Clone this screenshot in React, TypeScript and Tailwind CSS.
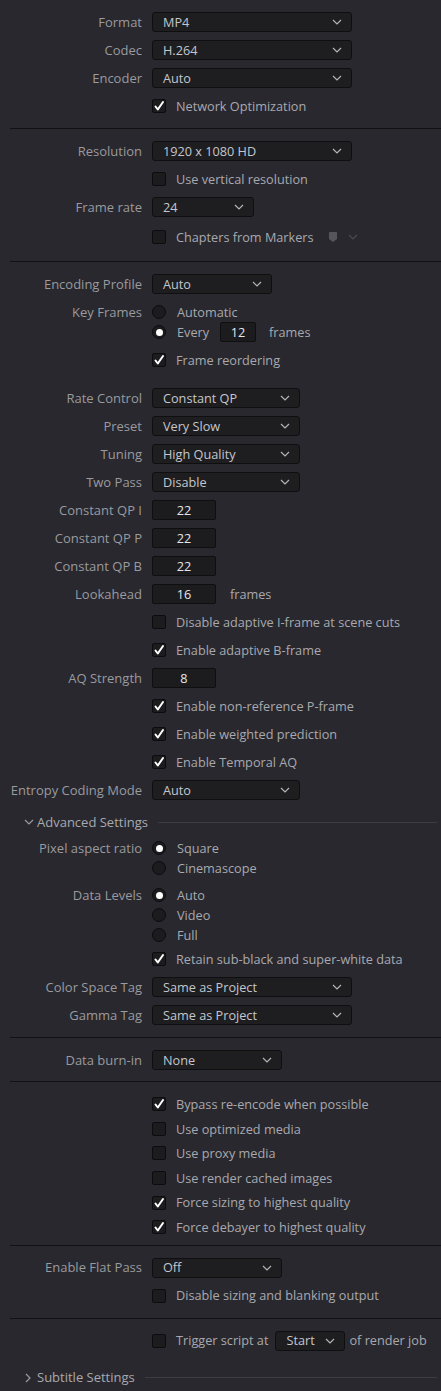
import type { ReactNode } from "react"

function Chevron({ className = "text-[#b4b4b8]" }: { className?: string }) {
  return (
    <svg width="10" height="6" viewBox="0 0 10 6" className={className}>
      <path d="M1 1l4 4 4-4" stroke="currentColor" fill="none" strokeWidth="1.2" />
    </svg>
  )
}

function Select({ value, w }: { value: string; w: string }) {
  return (
    <div className={`flex h-[20px] ${w} items-center justify-between rounded-[3px] border border-[#0f0f12] bg-[#1e1e21] pl-[10px] pr-[9px] text-[#c4c6cc]`}>
      <span>{value}</span>
      <Chevron />
    </div>
  )
}

function NumBox({ value, w }: { value: string; w: string }) {
  return (
    <div className={`flex h-[20px] ${w} items-center justify-center rounded-[2px] border border-[#0f0f12] bg-[#1c1c1f] text-[#e4e6ea]`}>
      {value}
    </div>
  )
}

function Check({ on = false }: { on?: boolean }) {
  return (
    <div className="flex h-[14px] w-[14px] shrink-0 items-center justify-center rounded-[2px] border border-[#0c0c0e] bg-[#1c1c1f]">
      {on && (
        <svg width="12" height="12" viewBox="0 0 12 12">
          <path d="M2.5 6.5l2.3 3L10 2" stroke="#fff" fill="none" strokeWidth="2" strokeLinecap="round" strokeLinejoin="round" />
        </svg>
      )}
    </div>
  )
}

function Radio({ on = false }: { on?: boolean }) {
  return (
    <div className="flex h-[14px] w-[14px] shrink-0 items-center justify-center rounded-full border border-[#0c0c0e] bg-[#1c1c1f]">
      {on && <div className="h-[7px] w-[7px] rounded-full bg-white" />}
    </div>
  )
}

function Row({ label = "", h = "h-[28px]", className = "", children }: { label?: string; h?: string; className?: string; children?: ReactNode }) {
  return (
    <div className={`flex ${h} items-center ${className}`}>
      <div className="w-[142px] shrink-0 whitespace-nowrap text-right text-[13px] text-[#9a9a9f]">{label}</div>
      <div className="ml-[10px] flex items-center whitespace-nowrap">{children}</div>
    </div>
  )
}

function CheckRow({ label, on = false, h = "h-[28px]", className = "", children }: { label: string; on?: boolean; h?: string; className?: string; children?: ReactNode }) {
  return (
    <Row h={h} className={className}>
      <Check on={on} />
      <span className="ml-[10px] text-[#a8a9ae]">{label}</span>
      {children}
    </Row>
  )
}

function RadioItem({ label, on = false }: { label: string; on?: boolean }) {
  return (
    <div className="flex items-center">
      <Radio on={on} />
      <span className="ml-[11px] text-[#a8a9ae]">{label}</span>
    </div>
  )
}

function Divider() {
  return <div className="ml-[10px] h-px bg-[#121214]" />
}

function Group({ title, open }: { title: string; open: boolean }) {
  return (
    <div className="flex h-[24px] items-center pl-[24px] pr-[4px]">
      {open ? (
        <Chevron className="text-[#9a9a9f]" />
      ) : (
        <svg width="6" height="10" viewBox="0 0 6 10" className="ml-[1px] text-[#9a9a9f]">
          <path d="M1 1l4 4-4 4" stroke="currentColor" fill="none" strokeWidth="1.2" />
        </svg>
      )}
      <span className={`${open ? "ml-[3px]" : "ml-[6px]"} whitespace-nowrap text-[13px] text-[#a8a9ae]`}>{title}</span>
      <div className="ml-[10px] h-px flex-1 bg-[#3c3c42]" />
    </div>
  )
}

export default function App() {
  return (
    <div className="min-h-[1391px] w-[441px] bg-[#28282e] font-['Open_Sans',sans-serif] text-[12.7px] leading-none">
      <div className="pt-[8px] pb-[8px]">
        <Row label="Format"><Select value="MP4" w="w-[200px]" /></Row>
        <Row label="Codec"><Select value="H.264" w="w-[200px]" /></Row>
        <Row label="Encoder"><Select value="Auto" w="w-[200px]" /></Row>
        <CheckRow label="Network Optimization" on />
      </div>
      <Divider />
      <div className="pt-[8px] pb-[8px]">
        <Row label="Resolution"><Select value="1920 x 1080 HD" w="w-[200px]" /></Row>
        <CheckRow label="Use vertical resolution" />
        <Row label="Frame rate"><Select value="24" w="w-[102px]" /></Row>
        <CheckRow label="Chapters from Markers" h="h-[32px]">
          <svg width="10" height="12" viewBox="0 0 10 12" className="ml-[14px]">
            <path d="M1 1.5Q1 1 1.5 1h7q.5 0 .5.5V8l-4 3-4-3z" fill="#55555b" />
          </svg>
          <Chevron className="ml-[10px] text-[#4a4a50]" />
        </CheckRow>
      </div>
      <Divider />
      <div className="pt-[8px] pb-[8px]">
        <Row label="Encoding Profile"><Select value="Auto" w="w-[120px]" /></Row>
        <Row label="Key Frames" h="h-[20px]" className="mt-[4px]"><RadioItem label="Automatic" /></Row>
        <Row h="h-[20px]">
          <RadioItem label="Every" on />
          <div className="ml-[11px]"><NumBox value="12" w="w-[36px]" /></div>
          <span className="ml-[13px] text-[#a8a9ae]">frames</span>
        </Row>
        <CheckRow label="Frame reordering" on className="mt-[4px]" />
        <Row label="Rate Control" className="mt-[10px]"><Select value="Constant QP" w="w-[148px]" /></Row>
        <Row label="Preset"><Select value="Very Slow" w="w-[148px]" /></Row>
        <Row label="Tuning"><Select value="High Quality" w="w-[148px]" /></Row>
        <Row label="Two Pass"><Select value="Disable" w="w-[148px]" /></Row>
        <Row label="Constant QP I"><NumBox value="22" w="w-[64px]" /></Row>
        <Row label="Constant QP P"><NumBox value="22" w="w-[64px]" /></Row>
        <Row label="Constant QP B"><NumBox value="22" w="w-[64px]" /></Row>
        <Row label="Lookahead">
          <NumBox value="16" w="w-[64px]" />
          <span className="ml-[14px] text-[#a8a9ae]">frames</span>
        </Row>
        <CheckRow label="Disable adaptive I-frame at scene cuts" />
        <CheckRow label="Enable adaptive B-frame" on />
        <Row label="AQ Strength"><NumBox value="8" w="w-[64px]" /></Row>
        <CheckRow label="Enable non-reference P-frame" on />
        <CheckRow label="Enable weighted prediction" on />
        <CheckRow label="Enable Temporal AQ" on />
        <Row label="Entropy Coding Mode"><Select value="Auto" w="w-[148px]" /></Row>
        <div className="mt-[6px]"><Group title="Advanced Settings" open /></div>
        <Row label="Pixel aspect ratio" h="h-[20px]" className="mt-[4px]"><RadioItem label="Square" on /></Row>
        <Row h="h-[20px]"><RadioItem label="Cinemascope" /></Row>
        <Row label="Data Levels" h="h-[20px]" className="mt-[7px]"><RadioItem label="Auto" on /></Row>
        <Row h="h-[20px]"><RadioItem label="Video" /></Row>
        <Row h="h-[20px]"><RadioItem label="Full" /></Row>
        <CheckRow label="Retain sub-black and super-white data" on />
        <Row label="Color Space Tag"><Select value="Same as Project" w="w-[200px]" /></Row>
        <Row label="Gamma Tag"><Select value="Same as Project" w="w-[200px]" /></Row>
      </div>
      <Divider />
      <div className="pt-[8px] pb-[7px]">
        <Row label="Data burn-in"><Select value="None" w="w-[130px]" /></Row>
      </div>
      <Divider />
      <div className="pt-[10px] pb-[5px]">
        <CheckRow label="Bypass re-encode when possible" on h="h-[24.6px]" />
        <CheckRow label="Use optimized media" h="h-[24.6px]" />
        <CheckRow label="Use proxy media" h="h-[24.6px]" />
        <CheckRow label="Use render cached images" h="h-[24.6px]" />
        <CheckRow label="Force sizing to highest quality" on h="h-[24.6px]" />
        <CheckRow label="Force debayer to highest quality" on h="h-[24.6px]" />
      </div>
      <Divider />
      <div className="pt-[8px] pb-[8px]">
        <Row label="Enable Flat Pass"><Select value="Off" w="w-[130px]" /></Row>
        <CheckRow label="Disable sizing and blanking output" />
      </div>
      <Divider />
      <div className="pt-[8px]">
        <CheckRow label="Trigger script at">
          <div className="ml-[7px] flex h-[20px] w-[70px] items-center justify-between rounded-[3px] border border-[#0f0f12] bg-[#1e1e21] pl-[10px] pr-[9px] text-[#c4c6cc]">
            <span>Start</span>
            <Chevron />
          </div>
          <span className="ml-[4px] text-[#a8a9ae]">of render job</span>
        </CheckRow>
        <div className="mt-[11px]"><Group title="Subtitle Settings" open={false} /></div>
      </div>
    </div>
  )
}
